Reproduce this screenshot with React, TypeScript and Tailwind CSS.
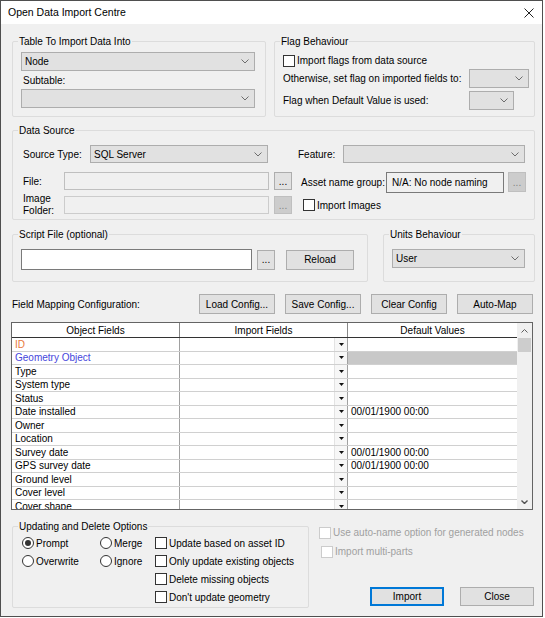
import React from "react";

const Chevron = ({ color = "#6d6d6d" }: { color?: string }) => (
  <svg width="8" height="5" viewBox="0 0 8 5">
    <path d="M0.5 0.5 L4 4 L7.5 0.5" fill="none" stroke={color} strokeWidth="1" />
  </svg>
);

function Select({ value = "", className = "" }: { value?: string; className?: string }) {
  return (
    <div className={`flex items-center justify-between border border-[#adadad] bg-[#e1e1e1] pl-[3px] pr-[5px] ${className}`}>
      <span>{value}</span>
      <Chevron />
    </div>
  );
}

function Button({ label, className = "", disabled = false }: { label: string; className?: string; disabled?: boolean }) {
  return (
    <div
      className={`flex items-center justify-center border ${
        disabled ? "border-[#bfbfbf] bg-[#cccccc] text-[#838383]" : "border-[#adadad] bg-[#e1e1e1]"
      } ${className}`}
    >
      {label}
    </div>
  );
}

function Check({ label, disabled = false, className = "" }: { label: string; disabled?: boolean; className?: string }) {
  return (
    <div className={`flex items-center gap-[2px] h-[13px] ${className}`}>
      <span
        className={`w-[12px] h-[12px] border bg-white ${disabled ? "border-[#cccccc]" : "border-[#333333]"}`}
      />
      <span className={disabled ? "text-[#a0a0a0]" : ""}>{label}</span>
    </div>
  );
}

function Radio({ label, checked = false }: { label: string; checked?: boolean }) {
  return (
    <div className="flex items-center gap-[2px]">
      <span className="w-[12px] h-[12px] rounded-full border border-[#333333] bg-white flex items-center justify-center">
        {checked && <span className="w-[6px] h-[6px] rounded-full bg-[#333333]" />}
      </span>
      <span>{label}</span>
    </div>
  );
}

function Group({ title, className = "", children }: { title: string; className?: string; children?: React.ReactNode }) {
  return (
    <div className={`border border-[#dcdcdc] rounded-[2px] ${className}`}>
      <div className="-mt-[7px] ml-[5px] w-fit px-[1px] h-[13px] bg-[#f0f0f0]">{title}</div>
      {children}
    </div>
  );
}

const rows = [
  { name: "ID", color: "text-[#e8793a]" },
  { name: "Geometry Object", color: "text-[#4646dc]", gray: true },
  { name: "Type" },
  { name: "System type" },
  { name: "Status" },
  { name: "Date installed", def: "00/01/1900 00:00" },
  { name: "Owner" },
  { name: "Location" },
  { name: "Survey date", def: "00/01/1900 00:00" },
  { name: "GPS survey date", def: "00/01/1900 00:00" },
  { name: "Ground level" },
  { name: "Cover level" },
  { name: "Cover shape" },
];

export default function App() {
  return (
    <div className="w-[543px] h-[617px] border border-[#4f4f4f] flex flex-col font-['Liberation_Sans',Arial,sans-serif] text-[10px] leading-[13px] text-black">
      {/* title bar */}
      <div className="h-[23px] bg-white flex items-center justify-between pl-[7px] pr-[8px]">
        <span className="text-[10.5px]">Open Data Import Centre</span>
        <svg width="10" height="10" viewBox="0 0 10 10">
          <path d="M0.5 0.5 L9.5 9.5 M9.5 0.5 L0.5 9.5" stroke="#222" strokeWidth="1" />
        </svg>
      </div>

      <div className="flex-1 bg-[#f0f0f0] pl-[11px] pr-[7px] pt-[17px]">
        {/* top row */}
        <div className="flex gap-[8px] h-[76px]">
          <Group title="Table To Import Data Into" className="w-[254px]">
            <div className="pl-[8px] pr-[10px]">
              <Select value="Node" className="mt-[4px] h-[19px]" />
              <div className="mt-[3px] h-[13px] pl-[2px]">Subtable:</div>
              <Select className="mt-[2px] h-[19px]" />
            </div>
          </Group>
          <Group title="Flag Behaviour" className="flex-1">
            <div className="pl-[8px]">
              <Check label="Import flags from data source" className="mt-[6px]" />
              <div className="flex items-center h-[19px] mt-[2px]">
                <span className="w-[186px]">Otherwise, set flag on imported fields to:</span>
                <Select className="w-[60px] h-[19px]" />
              </div>
              <div className="flex items-center h-[19px] mt-[3px]">
                <span className="w-[186px]">Flag when Default Value is used:</span>
                <Select className="w-[45px] h-[19px]" />
              </div>
            </div>
          </Group>
        </div>

        {/* data source */}
        <Group title="Data Source" className="mt-[13px] h-[90px]">
          <div className="pl-[10px]">
            <div className="flex items-center h-[18px] mt-[8px]">
              <span className="w-[67px]">Source Type:</span>
              <Select value="SQL Server" className="w-[178px] h-[18px]" />
              <span className="ml-[30px] w-[45px]">Feature:</span>
              <Select className="w-[182px] h-[18px]" />
            </div>
            <div className="flex items-start h-[22px] mt-[9px]">
              <span className="w-[41px] h-[18px] flex items-center">File:</span>
              <div className="w-[205px] h-[18px] border border-[#bfbfbf] bg-[#f0f0f0]" />
              <Button label="..." className="ml-[5px] w-[18px] h-[18px]" />
              <span className="ml-[9px] w-[85px] h-[21px] flex items-center">Asset name group:</span>
              <div className="w-[118px] h-[21px] border border-[#7a7a7a] bg-[#f0f0f0] flex items-center pl-[5px]">
                N/A: No node naming
              </div>
              <Button label="..." disabled className="ml-[4px] w-[18px] h-[20px]" />
            </div>
            <div className="flex items-center h-[18px] mt-[2px]">
              <span className="w-[41px] leading-[12px]">
                Image
                <br />
                Folder:
              </span>
              <div className="w-[205px] h-[18px] border border-[#cccccc] bg-[#f0f0f0]" />
              <Button label="..." disabled className="ml-[5px] w-[18px] h-[18px]" />
              <Check label="Import Images" className="ml-[11px]" />
            </div>
          </div>
        </Group>

        {/* script / units */}
        <div className="flex gap-[15px] mt-[14px] h-[48px]">
          <Group title="Script File (optional)" className="w-[356px]">
            <div className="flex items-center pl-[8px] mt-[8px] h-[21px]">
              <div className="w-[231px] h-[21px] border border-[#7a7a7a] bg-white" />
              <Button label="..." className="ml-[5px] w-[18px] h-[20px]" />
              <Button label="Reload" className="ml-[11px] w-[68px] h-[20px]" />
            </div>
          </Group>
          <Group title="Units Behaviour" className="flex-1">
            <div className="pl-[8px] pr-[9px]">
              <Select value="User" className="mt-[8px] h-[19px]" />
            </div>
          </Group>
        </div>

        {/* field mapping toolbar */}
        <div className="flex items-center mt-[12px] h-[20px] pr-[2px]">
          <span className="flex-1">Field Mapping Configuration:</span>
          <div className="flex gap-[10px]">
            <Button label="Load Config..." className="w-[76px] h-[20px]" />
            <Button label="Save Config..." className="w-[76px] h-[20px]" />
            <Button label="Clear Config" className="w-[76px] h-[20px]" />
            <Button label="Auto-Map" className="w-[76px] h-[20px]" />
          </div>
        </div>

        {/* mapping grid */}
        <div className="mt-[8px] -ml-[1px] w-[522px] h-[188px] border border-[#646464] bg-white flex">
          <div className="flex-1 flex flex-col overflow-hidden">
            <div className="flex h-[15px] border-b border-[#333333] shrink-0">
              <div className="w-[168px] border-r border-[#888888] flex items-center justify-center">Object Fields</div>
              <div className="w-[168px] border-r border-[#888888] flex items-center justify-center">Import Fields</div>
              <div className="flex-1 flex items-center justify-center">Default Values</div>
            </div>
            {rows.map((r) => (
              <div key={r.name} className="flex h-[13.5px] shrink-0 border-b border-[#d0d0d0]">
                <div className={`w-[168px] border-r border-[#a0a0a0] pl-[3px] flex items-center ${r.color ?? ""}`}>
                  {r.name}
                </div>
                <div className="w-[168px] border-r border-[#a0a0a0] flex justify-end">
                  <div className="w-[13px] border-l border-[#e3e3e3] bg-[#f7f7f7] flex items-center justify-center">
                    <svg width="5" height="3" viewBox="0 0 5 3">
                      <path d="M0 0 H5 L2.5 3 Z" fill="#111" />
                    </svg>
                  </div>
                </div>
                <div className={`flex-1 pl-[3px] flex items-center ${r.gray ? "bg-[#c8c8c8]" : ""}`}>{r.def ?? ""}</div>
              </div>
            ))}
          </div>
          <div className="w-[15px] bg-[#f0f0f0] flex flex-col items-center">
            <div className="h-[15px] flex items-center justify-center">
              <svg width="7" height="4" viewBox="0 0 7 4">
                <path d="M0.5 3.5 L3.5 0.5 L6.5 3.5" fill="none" stroke="#606060" strokeWidth="1" />
              </svg>
            </div>
            <div className="w-[13px] h-[14px] bg-[#cdcdcd]" />
            <div className="flex-1" />
            <div className="h-[15px] flex items-center justify-center">
              <svg width="7" height="4" viewBox="0 0 7 4">
                <path d="M0.5 0.5 L3.5 3.5 L6.5 0.5" fill="none" stroke="#505050" strokeWidth="1.4" />
              </svg>
            </div>
          </div>
        </div>

        {/* bottom row */}
        <div className="flex mt-[16px] h-[82px]">
          <Group title="Updating and Delete Options" className="w-[297px]">
            <div className="grid grid-cols-[78px_55px_1fr] auto-rows-[18px] items-center pl-[9px] mt-[1px]">
              <Radio label="Prompt" checked />
              <Radio label="Merge" />
              <Check label="Update based on asset ID" />
              <Radio label="Overwrite" />
              <Radio label="Ignore" />
              <Check label="Only update existing objects" />
              <span />
              <span />
              <Check label="Delete missing objects" />
              <span />
              <span />
              <Check label="Don't update geometry" />
            </div>
          </Group>
          <div className="flex-1 flex flex-col pl-[10px]">
            <Check label="Use auto-name option for generated nodes" disabled />
            <Check label="Import multi-parts" disabled className="mt-[6px] ml-[2px]" />
            <div className="mt-auto mb-[2px] flex justify-end gap-[16px] pr-[1px]">
              <Button label="Import" className="w-[74px] h-[19px] border-[#0078d7]! border-2" />
              <Button label="Close" className="w-[74px] h-[19px]" />
            </div>
          </div>
        </div>
      </div>
    </div>
  );
}
